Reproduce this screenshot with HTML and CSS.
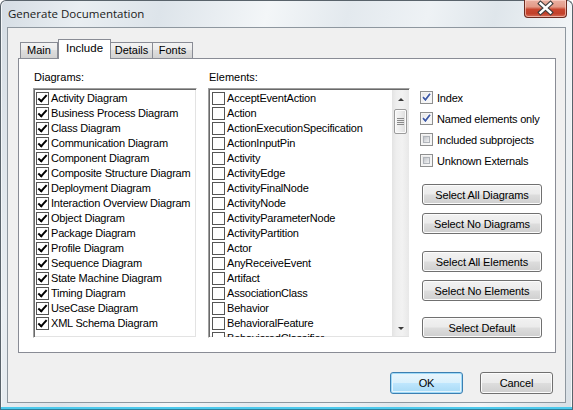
FILE: index.html
```html
<!DOCTYPE html>
<html>
<head>
<meta charset="utf-8">
<title>Generate Documentation</title>
<link rel="stylesheet" href="styles.css">
</head>
<body>
<div class="window">
  <div class="titlebar">
    <span class="title">Generate Documentation</span>
    <div class="close">
      <svg width="43" height="18" viewBox="0 0 43 18">
        <path d="M16.5 4.5 L26.5 13.5 M26.5 4.5 L16.5 13.5" stroke="#3d3d3d" stroke-width="4.6" stroke-linecap="square" fill="none"/>
        <path d="M16.5 4.5 L26.5 13.5 M26.5 4.5 L16.5 13.5" stroke="#ffffff" stroke-width="2.4" stroke-linecap="square" fill="none"/>
      </svg>
    </div>
  </div>
  <div class="client">
    <div class="tabs">
      <div class="tab tab-main">Main</div>
      <div class="tab tab-include active">Include</div>
      <div class="tab tab-details">Details</div>
      <div class="tab tab-fonts">Fonts</div>
    </div>
    <div class="panel">
      <div class="col col-diagrams">
        <div class="label">Diagrams:</div>
        <div class="list">
          <div class="item"><span class="cb on"></span>Activity Diagram</div>
          <div class="item"><span class="cb on"></span>Business Process Diagram</div>
          <div class="item"><span class="cb on"></span>Class Diagram</div>
          <div class="item"><span class="cb on"></span>Communication Diagram</div>
          <div class="item"><span class="cb on"></span>Component Diagram</div>
          <div class="item"><span class="cb on"></span>Composite Structure Diagram</div>
          <div class="item"><span class="cb on"></span>Deployment Diagram</div>
          <div class="item"><span class="cb on"></span>Interaction Overview Diagram</div>
          <div class="item"><span class="cb on"></span>Object Diagram</div>
          <div class="item"><span class="cb on"></span>Package Diagram</div>
          <div class="item"><span class="cb on"></span>Profile Diagram</div>
          <div class="item"><span class="cb on"></span>Sequence Diagram</div>
          <div class="item"><span class="cb on"></span>State Machine Diagram</div>
          <div class="item"><span class="cb on"></span>Timing Diagram</div>
          <div class="item"><span class="cb on"></span>UseCase Diagram</div>
          <div class="item"><span class="cb on"></span>XML Schema Diagram</div>
        </div>
      </div>
      <div class="col col-elements">
        <div class="label">Elements:</div>
        <div class="list list-scroll">
          <div class="items">
            <div class="item"><span class="cb"></span>AcceptEventAction</div>
            <div class="item"><span class="cb"></span>Action</div>
            <div class="item"><span class="cb"></span>ActionExecutionSpecification</div>
            <div class="item"><span class="cb"></span>ActionInputPin</div>
            <div class="item"><span class="cb"></span>Activity</div>
            <div class="item"><span class="cb"></span>ActivityEdge</div>
            <div class="item"><span class="cb"></span>ActivityFinalNode</div>
            <div class="item"><span class="cb"></span>ActivityNode</div>
            <div class="item"><span class="cb"></span>ActivityParameterNode</div>
            <div class="item"><span class="cb"></span>ActivityPartition</div>
            <div class="item"><span class="cb"></span>Actor</div>
            <div class="item"><span class="cb"></span>AnyReceiveEvent</div>
            <div class="item"><span class="cb"></span>Artifact</div>
            <div class="item"><span class="cb"></span>AssociationClass</div>
            <div class="item"><span class="cb"></span>Behavior</div>
            <div class="item"><span class="cb"></span>BehavioralFeature</div>
            <div class="item"><span class="cb"></span>BehavioredClassifier</div>
          </div>
          <div class="scrollbar">
            <div class="arrow arrow-up"></div>
            <div class="thumb"><span class="grip"></span></div>
            <div class="track"></div>
            <div class="arrow arrow-down"></div>
          </div>
        </div>
      </div>
      <div class="col options">
        <div class="opt"><span class="vcb on"><svg width="11" height="11" viewBox="0 0 11 11"><path d="M2 5.2 L4.4 7.8 L9 1.8" stroke="#ffffff" stroke-width="3.4" fill="none"/><path d="M2 5.2 L4.4 7.8 L9 1.8" stroke="#3f5aa6" stroke-width="1.8" fill="none"/></svg></span>Index</div>
        <div class="opt"><span class="vcb on"><svg width="11" height="11" viewBox="0 0 11 11"><path d="M2 5.2 L4.4 7.8 L9 1.8" stroke="#ffffff" stroke-width="3.4" fill="none"/><path d="M2 5.2 L4.4 7.8 L9 1.8" stroke="#3f5aa6" stroke-width="1.8" fill="none"/></svg></span>Named elements only</div>
        <div class="opt"><span class="vcb"><span class="vcb-in"></span></span>Included subprojects</div>
        <div class="opt"><span class="vcb"><span class="vcb-in"></span></span>Unknown Externals</div>
        <button class="btn side b1">Select All Diagrams</button>
        <button class="btn side b2">Select No Diagrams</button>
        <button class="btn side b3">Select All Elements</button>
        <button class="btn side b4">Select No Elements</button>
        <button class="btn side b5">Select Default</button>
      </div>
    </div>
    <div class="footer">
      <button class="btn foot default">OK</button>
      <button class="btn foot">Cancel</button>
    </div>
  </div>
</div>
</body>
</html>
```
FILE: styles.css
```css
* { box-sizing: border-box; }
html, body { margin: 0; padding: 0; }
body {
  width: 573px;
  height: 410px;
  overflow: hidden;
  font-family: "Liberation Sans", Arial, sans-serif;
  font-size: 11px;
  color: #000;
  background: #ffffff;
}

.window {
  width: 573px;
  height: 410px;
  display: flex;
  flex-direction: column;
  border: 1px solid #59636b;
  border-bottom-color: #2c7f9c;
  border-radius: 6px 6px 0 0;
  padding: 0 6px 6px;
  background:
    linear-gradient(104deg,
      #d5dde4 0%, #e9eef2 12%, #dde4ea 24%, #f3f6f8 40%,
      #e3e9ee 52%, #eef2f5 64%, #dfe6eb 74%, #f2f5f7 86%, #d8dfe5 100%);
  box-shadow: inset 0 -2px 0 #4cc9ec, inset 1px 0 0 #f4f7f9, inset -1px 0 0 #f4f7f9;
}

.titlebar {
  height: 26px;
  display: flex;
  align-items: flex-start;
  flex: none;
}
.title {
  font-family: "Open Sans", "Noto Sans", sans-serif;
  font-size: 11.5px;
  line-height: 16px;
  margin: 5px 0 0 1px;
  color: #1a1a1a;
}
.close {
  margin: -1px -1px 0 auto;
  width: 43px;
  height: 18px;
  border: 1px solid #6b2a1f;
  border-top: none;
  border-radius: 0 0 4px 4px;
  background: linear-gradient(#eab0a2 0%, #e39a87 40%, #c8462f 55%, #c2412a 80%, #d6705c 100%);
  box-shadow: inset 0 0 0 1px rgba(255, 220, 210, 0.6);
  overflow: hidden;
}
.close svg { display: block; margin: -1px 0 0 -1px; }

.client {
  flex: 1;
  border: 1px solid #8e979f;
  background: #f0f0f0;
  padding: 11px 9px 0 10px;
  display: flex;
  flex-direction: column;
}

/* Tabs */
.tabs {
  display: flex;
  align-items: flex-end;
  height: 19px;
  margin-left: 2px;
  position: relative;
  z-index: 1;
  flex: none;
}
.tab {
  height: 16px;
  border: 1px solid #898c95;
  border-bottom: none;
  background: linear-gradient(#f3f3f3 0%, #ebebeb 45%, #dedede 50%, #d2d2d2 100%);
  line-height: 15px;
  text-align: center;
  white-space: nowrap;
}
.tab + .tab { border-left: none; }
.tab-main { width: 38px; }
.tab-include { width: 53px; }
.tab-details { width: 42px; }
.tab-fonts { width: 40px; }
.tab.active {
  height: 20px;
  margin-bottom: -1px;
  background: #ffffff;
  border-left: 1px solid #898c95;
  padding-top: 1px;
  font-size: 11.5px;
}

.panel {
  height: 295px;
  border: 1px solid #898c95;
  background: #ffffff;
  display: flex;
  padding: 12px 0 0 14px;
  flex: none;
}

.col-diagrams { width: 164px; margin-right: 11px; }
.col-elements { width: 202px; margin-right: 10px; }
.options { width: 122px; display: flex; flex-direction: column; padding-top: 16px; }

.label {
  line-height: 13px;
  height: 13px;
  margin-bottom: 4px;
  padding-left: 1px;
}

.list {
  height: 250px;
  border: 1px solid;
  border-color: #a0a0a0 #ffffff #ffffff #a0a0a0;
  box-shadow: inset 1px 1px 0 #696969, inset -1px -1px 0 #e3e3e3;
  background: #ffffff;
  overflow: hidden;
  padding: 1px 0 0 2px;
}
.list-scroll {
  display: flex;
  padding: 0;
}
.items {
  flex: 1;
  overflow: hidden;
  padding: 1px 0 0 3px;
}

.item {
  display: flex;
  align-items: center;
  height: 15px;
  white-space: nowrap;
  letter-spacing: -0.2px;
}
.cb {
  position: relative;
  flex: none;
  width: 13px;
  height: 13px;
  border: 1px solid #555555;
  background: #ffffff;
  margin: 2px 2px 0 0;
}
.cb.on::after {
  content: "";
  position: absolute;
  left: 3px;
  top: 0px;
  width: 3px;
  height: 7px;
  border: solid #000000;
  border-width: 0 2px 2px 0;
  transform: rotate(42deg);
}

/* Scrollbar */
.scrollbar {
  width: 17px;
  flex: none;
  margin: 1px 0 1px 0;
  display: flex;
  flex-direction: column;
  background: linear-gradient(90deg, #e3e3e3 0%, #eeeeee 25%, #f2f2f2 60%, #e8e8e8 100%);
}
.arrow {
  height: 17px;
  flex: none;
  display: flex;
  align-items: center;
  justify-content: center;
}
.arrow-up::before {
  content: "";
  border-left: 3px solid transparent;
  border-right: 3px solid transparent;
  border-bottom: 3px solid #3a3a3a;
  margin-top: 1px;
}
.arrow-down::before {
  content: "";
  border-left: 3px solid transparent;
  border-right: 3px solid transparent;
  border-top: 3px solid #3a3a3a;
  margin-top: 1px;
}
.thumb {
  height: 25px;
  margin: 2px 2px 0 2px;
  border: 1px solid #9b9b9b;
  border-radius: 2px;
  background: linear-gradient(90deg, #f7f7f7 0%, #ececec 50%, #dcdcdc 100%);
  box-shadow: inset 0 0 0 1px #fbfbfb;
  display: flex;
  align-items: center;
  justify-content: center;
  flex: none;
}
.grip {
  width: 7px;
  height: 7px;
  background: repeating-linear-gradient(#8a8a8a 0 1px, transparent 1px 2px);
}
.track { flex: 1; }

/* Options */
.opt {
  height: 21px;
  display: flex;
  align-items: center;
  white-space: nowrap;
  letter-spacing: -0.2px;
}
.vcb {
  position: relative;
  flex: none;
  width: 13px;
  height: 13px;
  border: 1px solid #8e8f8f;
  background: linear-gradient(135deg, #e6e6e6, #fbfbfb);
  box-shadow: inset 0 0 0 1px #f5f5f5;
  margin-right: 4px;
}
.vcb svg { display: block; }
.vcb-in {
  position: absolute;
  left: 2px;
  top: 2px;
  width: 7px;
  height: 7px;
  border: 1px solid #b0b4ba;
  background: linear-gradient(135deg, #bfc3c8 0%, #dcdee1 55%, #f2f3f4 100%);
}

.btn {
  font-family: "Liberation Sans", Arial, sans-serif;
  font-size: 11px;
  color: #000000;
  padding: 0;
  margin: 0;
  border: 1px solid #707070;
  border-radius: 3px;
  background: linear-gradient(#f2f2f2 0%, #ebebeb 48%, #dddddd 52%, #cfcfcf 100%);
  box-shadow: inset 0 0 0 1px #fcfcfc;
  letter-spacing: -0.1px;
}
.side {
  width: 120px;
  height: 21px;
  margin-left: 2px;
  flex: none;
}
.b1 { margin-top: 13px; }
.b2 { margin-top: 8px; }
.b3 { margin-top: 17px; }
.b4 { margin-top: 8px; }
.b5 { margin-top: 16px; }

.footer {
  display: flex;
  justify-content: flex-end;
  gap: 17px;
  padding-right: 3px;
  margin-top: 19px;
}
.foot {
  width: 73px;
  height: 22px;
}
.default {
  border-color: #3c7fb1;
  background: linear-gradient(#eaf6fd 0%, #d9f0fc 48%, #bee6fd 52%, #a7d9f5 100%);
  box-shadow: inset 0 0 0 1px #9fdaf8, inset 0 0 0 2px #e6f4fc;
}
```
